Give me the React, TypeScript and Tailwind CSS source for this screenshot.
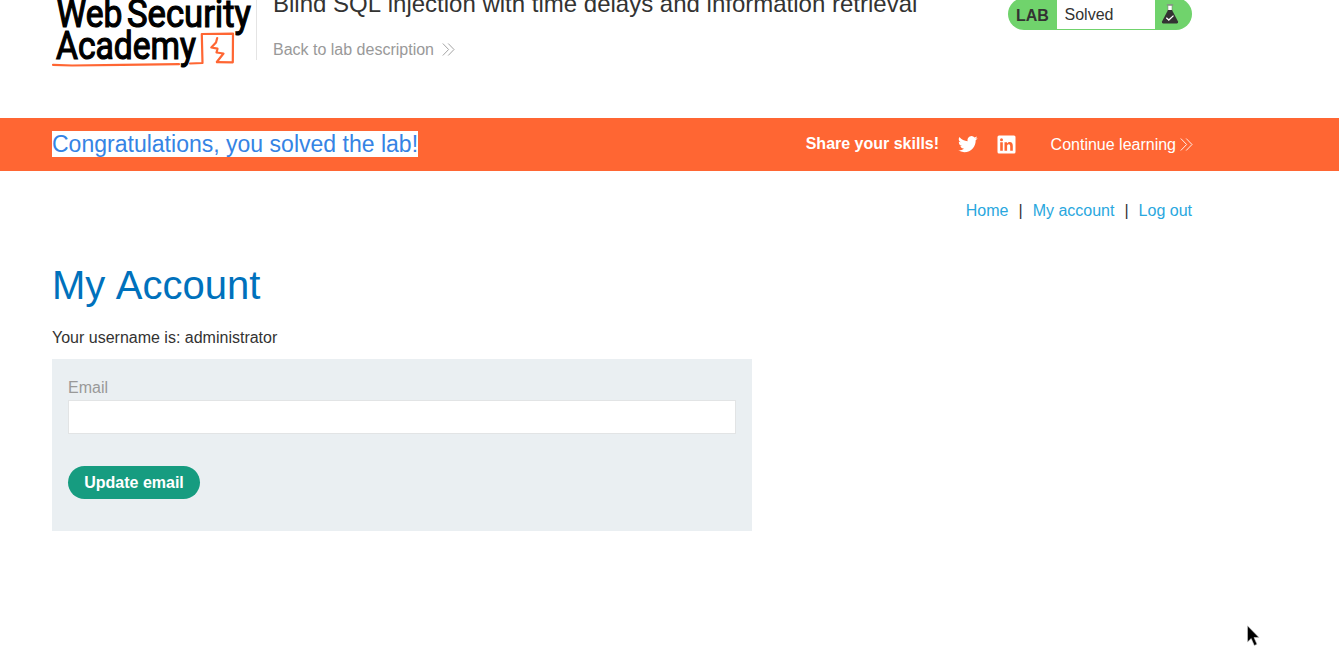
import React from 'react';

const AcademyLogo: React.FC = () => (
    <svg width="204" height="118" viewBox="0 -48 204 118" className="shrink-0 -mt-12" aria-label="Web Security Academy">
        <g fill="#000" stroke="#000" strokeWidth="1.2" fontFamily="Roboto, sans-serif" fontSize="38" fontWeight="400">
            <text x="4.5" y="26.5" textLength="66" lengthAdjust="spacingAndGlyphs">Web</text>
            <text x="75" y="26.5" textLength="124" lengthAdjust="spacingAndGlyphs">Security</text>
            <text x="4" y="59" textLength="140" lengthAdjust="spacingAndGlyphs">Academy</text>
        </g>
        <g fill="none" stroke="#ff6633" strokeWidth="2.2" strokeLinejoin="round" strokeLinecap="round">
            <path d="M1 64.8 L20 65.5 L70 64.8 L127 64.2 M138 63.5 L150.5 63 L149.8 34 L181 33.7 L180.8 62.3 L165 62.2" />
            <path d="M165.2 38 L164 42.5 L159.3 47.5 L165.5 48.7 L164.5 52.5 L171.5 53.5 L164.8 62" />
        </g>
    </svg>
);

const DoubleChevron: React.FC<{ className?: string }> = ({ className }) => (
    <svg width="13" height="13" viewBox="0 0 13 13" fill="none" stroke="currentColor" strokeWidth="0.9" className={className}>
        <path d="M0.8 0.5 L6.6 6.5 L0.8 12.5 M6.2 0.5 L12 6.5 L6.2 12.5" />
    </svg>
);

const LabStatus: React.FC = () => (
    <div className="-mt-0.5 flex h-8 w-[184px] shrink-0 overflow-hidden rounded-full bg-[#70d36c] py-px">
        <span className="w-[49px] pl-2 pt-px text-base/8 font-bold">LAB</span>
        <span className="w-[98px] bg-white pl-[7.5px] text-base/8">Solved</span>
        <svg width="18" height="20" viewBox="0 0 18 20" className="ml-1.5 mt-[5px]">
            <path d="M5.8 0.8 H12.2" stroke="#8a8a8a" strokeWidth="1.2" />
            <path d="M7 1.4 H11 V7 H7 Z" fill="#fff" stroke="#777" strokeWidth="0.5" />
            <path d="M7 6 H11 L17 17.6 Q17.5 19.5 15.8 19.5 H2.2 Q0.5 19.5 1 17.6 Z" fill="#333332" />
            <path d="M5.3 13.8 L7.8 16 L12.5 11.6" fill="none" stroke="#fff" strokeWidth="1.3" />
        </svg>
    </div>
);

const TwitterIcon: React.FC = () => (
    <svg width="20" height="20" viewBox="0 0 24 24" fill="#fff">
        <path d="M23.6 4.9a9.6 9.6 0 0 1-2.8.8 4.8 4.8 0 0 0 2.1-2.7 9.7 9.7 0 0 1-3 1.2 4.8 4.8 0 0 0-8.3 4.4A13.7 13.7 0 0 1 1.7 3.6a4.8 4.8 0 0 0 1.5 6.4 4.8 4.8 0 0 1-2.2-.6v.1a4.8 4.8 0 0 0 3.9 4.7 4.8 4.8 0 0 1-2.2.1 4.8 4.8 0 0 0 4.5 3.3A9.7 9.7 0 0 1 .1 19.6a13.6 13.6 0 0 0 7.4 2.2c8.9 0 13.7-7.3 13.7-13.7v-.6a9.8 9.8 0 0 0 2.4-2.6z" />
    </svg>
);

const LinkedInIcon: React.FC = () => (
    <svg width="19" height="19" viewBox="0 0 19 19">
        <rect x="0.5" y="0.5" width="18" height="18" rx="1.5" fill="#fff" />
        <g fill="#ff6633">
            <circle cx="4.5" cy="4.7" r="1.5" />
            <path d="M3.2 7.3h2.6v8.5H3.2zM7.5 7.3H10v1.2c.5-.9 1.5-1.5 2.7-1.5 2.5 0 3.1 1.7 3.1 4v4.8h-2.6v-4.3c0-1.2-.2-2.3-1.5-2.3s-1.6 1-1.6 2.2v4.4H7.5z" />
        </g>
    </svg>
);

const Header: React.FC = () => (
    <header className="flex h-[118px] w-[1140px] ml-[52px] items-start overflow-hidden">
        <AcademyLogo />
        <div className="h-[60px] w-px shrink-0 bg-[#e4e4e4]" />
        <div className="-mt-2.5 ml-4 flex-1">
            <h2 className="whitespace-nowrap text-2xl/7">
                Blind SQL <span className="ml-[0.9px] inline-block">injection with time delays and information retrieval</span>
            </h2>
            <a href="#" className="mt-5 flex items-center text-base/6 text-[#999]">
                Back to lab description
                <DoubleChevron className="mb-0.5 ml-2" />
            </a>
        </div>
        <LabStatus />
    </header>
);

const SolvedBanner: React.FC = () => (
    <section className="h-[53px] bg-[#ff6633] text-white">
        <div className="ml-[52px] flex h-full w-[1141px] items-center">
            <h4 className="mr-auto mb-px bg-white text-[23px]/[26px] tracking-[0.01px] text-[#3584e4] whitespace-nowrap">Congratulations, you solved the lab!</h4>
            <span className="pb-0.5 font-bold">Share your skills!</span>
            <a href="#" className="ml-[18.5px] pb-0.5"><TwitterIcon /></a>
            <a href="#" className="ml-[19px]"><LinkedInIcon /></a>
            <a href="#" className="ml-[35px] flex items-center">
                Continue learning
                <DoubleChevron className="ml-1" />
            </a>
        </div>
    </section>
);

const AccountForm: React.FC = () => (
    <form className="h-[172px] w-[700px] bg-[#eaeff2] px-4 pt-4">
        <label htmlFor="email" className="block text-base/[25px] text-[#999]">Email</label>
        <input id="email" type="email" className="block h-[34px] w-full border border-[#e2e4e5] bg-white px-2" />
        <button type="button" className="mt-8 h-[33px] w-[132px] rounded-full bg-[#169c80] font-bold text-white">Update email</button>
    </form>
);

// Mouse pointer resting on the page
const Pointer: React.FC = () => (
    <svg width="14" height="22" viewBox="0 0 14 22" className="pointer-events-none absolute left-[1247px] top-[625px]">
        <path d="M0.5 0.8 V17 L4.2 13.5 L7.3 20.5 L10 19.3 L7 12.5 H12 Z" fill="#000" stroke="#ccc" strokeWidth="0.6" />
    </svg>
);

export default function App() {
    return (
        <div className="relative h-[646px] w-[1339px] overflow-hidden bg-white font-['Liberation_Sans',Arial,sans-serif] text-base text-[#333332]">
            <Header />
            <SolvedBanner />
            <main className="ml-[52px] w-[1140px]">
                <nav className="flex justify-end gap-2.5 pt-7 text-[#29a7de]">
                    <a href="#">Home</a>
                    <span className="text-[#333332]">|</span>
                    <a href="#">My account</a>
                    <span className="text-[#333332]">|</span>
                    <a href="#">Log out</a>
                </nav>
                <h1 className="mt-[38px] text-[40px]/[48px] text-[#0071bc] [word-spacing:1.5px]">My Account</h1>
                <p className="mb-[9px] mt-[17px]">Your username is: administrator</p>
                <AccountForm />
            </main>
            <Pointer />
        </div>
    );
}
